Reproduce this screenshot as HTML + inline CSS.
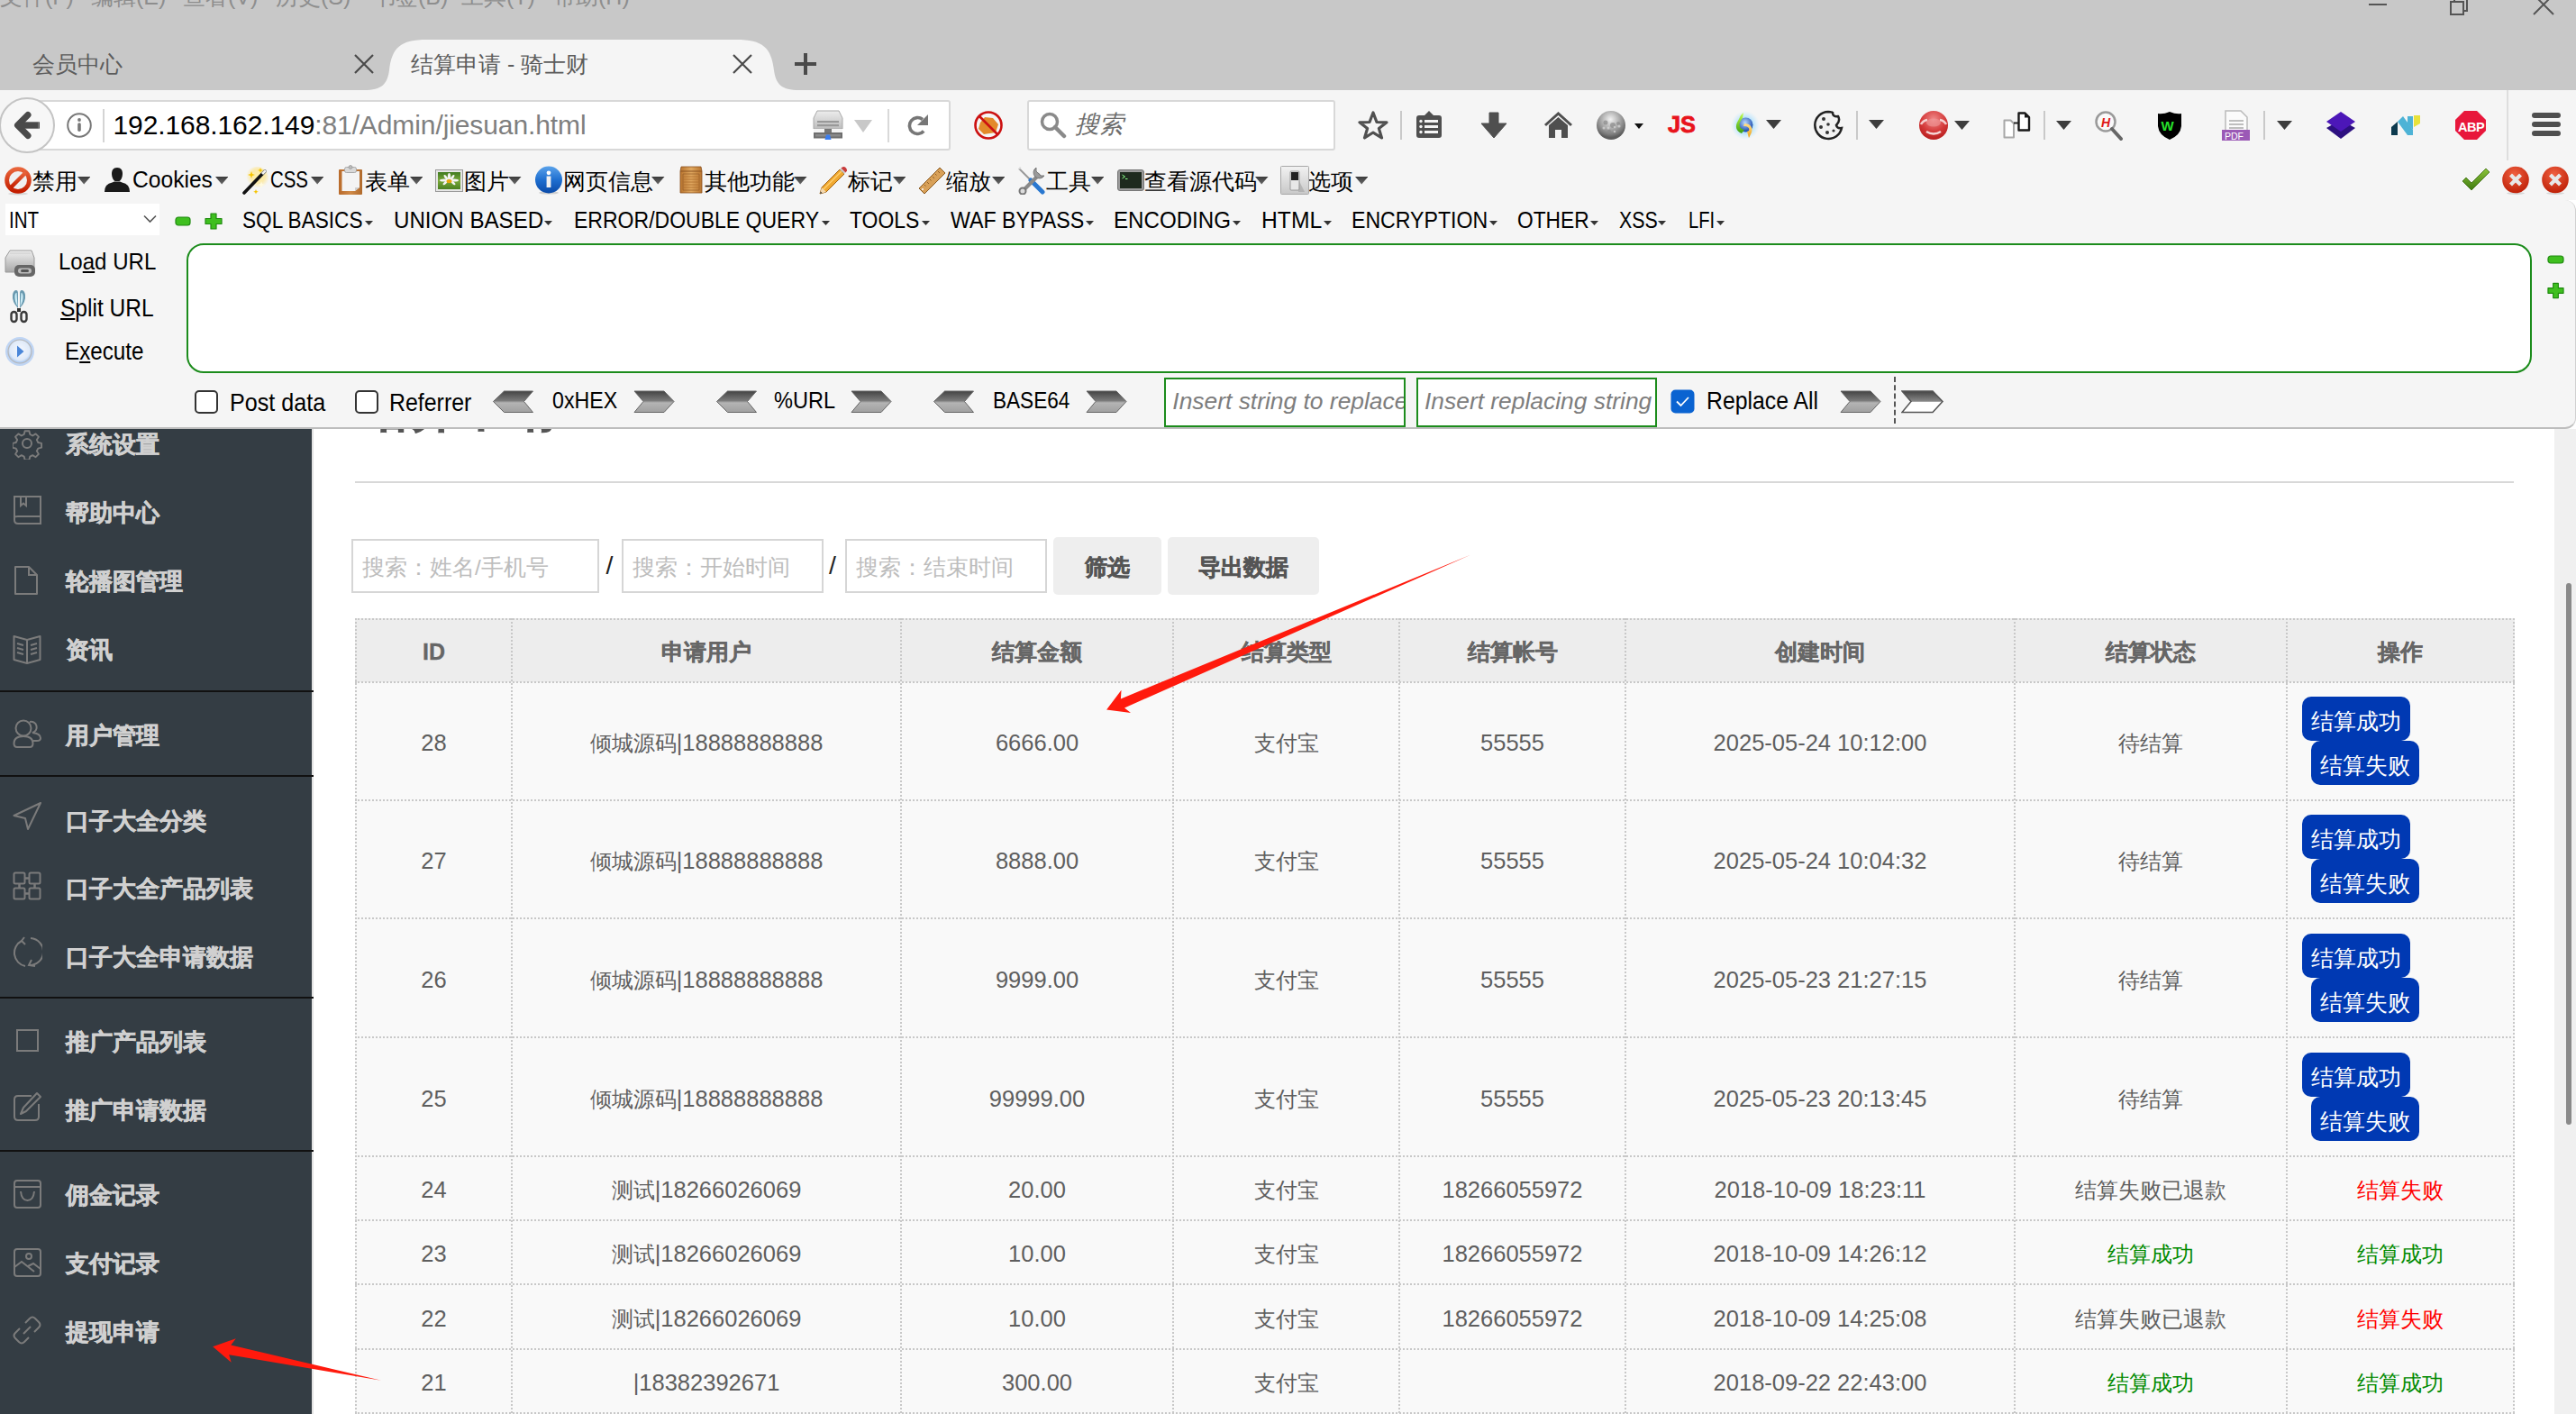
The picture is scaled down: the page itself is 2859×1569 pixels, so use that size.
<!DOCTYPE html>
<html><head><meta charset="utf-8">
<style>
*{box-sizing:border-box}
html,body{margin:0;padding:0}
body{width:2859px;height:1569px;position:relative;overflow:hidden;background:#fff;font-family:"Liberation Sans",sans-serif}
.a{position:absolute}
.t{position:absolute;white-space:nowrap;line-height:1}
/* title bar */
#tbar{left:0;top:0;width:2859px;height:100px;background:#c8c8c8}
.menu{color:#8e8e8e;font-size:25px;top:-16px}
/* nav */
#nav{left:0;top:100px;width:2859px;height:122px;background:#f5f5f5}
/* hackbar */
#hack{left:-2px;top:222px;width:2861px;height:254px;background:#f5f5f5;border-bottom:2px solid #bdbdbd;border-right:1.5px solid #d0d0d0;border-radius:0 12px 12px 0}
/* page */
#side{left:0;top:476px;width:348px;height:1093px;background:#343d44;border-right:2px solid #e3e3e3}
.si{color:#d0d0d0;font-weight:bold;font-size:26px;left:73px;-webkit-text-stroke:0.6px #d0d0d0}
.sdiv{left:0;width:348px;height:2px;background:#111}
.sic{left:14px;width:32px;height:32px}
</style></head><body>

<!-- ===== TITLE BAR / TABS ===== -->
<div id="tbar" class="a">
  <div class="t menu" style="left:0">文件(F)</div>
  <div class="t menu" style="left:101px">编辑(E)</div>
  <div class="t menu" style="left:203px">查看(V)</div>
  <div class="t menu" style="left:306px">历史(S)</div>
  <div class="t menu" style="left:414px">书签(B)</div>
  <div class="t menu" style="left:512px">工具(T)</div>
  <div class="t menu" style="left:614px">帮助(H)</div>
  <!-- window controls -->
  <div class="a" style="left:2629px;top:4px;width:20px;height:2px;background:#555"></div>
  <svg class="a" style="left:2718px;top:-6px" width="24" height="24" viewBox="0 0 24 24"><path d="M2 8h14v14H2z M6 8V4h14v14h-4" fill="none" stroke="#555" stroke-width="2"/></svg>
  <svg class="a" style="left:2810px;top:-6px" width="26" height="24" viewBox="0 0 26 24"><path d="M2 0L24 22M24 0L2 22" fill="none" stroke="#555" stroke-width="2"/></svg>
  <!-- inactive tab -->
  <div class="t" style="left:36px;top:59px;font-size:25px;color:#5c5c5c">会员中心</div>
  <svg class="a" style="left:393px;top:60px" width="22" height="22" viewBox="0 0 22 22"><path d="M1 1L21 21M21 1L1 21" stroke="#4a4a4a" stroke-width="2.2"/></svg>
  <!-- active tab -->
  <svg class="a" style="left:404px;top:43px" width="483" height="57" viewBox="0 0 483 57"><path d="M0 57 C20 57 26 50 28 35 C31 10 40 1 70 1 L413 1 C443 1 452 10 455 35 C457 50 463 57 483 57 Z" fill="#f5f5f5"/></svg>
  <div class="t" style="left:456px;top:59px;font-size:25px;color:#5c5c5c">结算申请 - 骑士财</div>
  <svg class="a" style="left:813px;top:60px" width="22" height="22" viewBox="0 0 22 22"><path d="M1 1L21 21M21 1L1 21" stroke="#4a4a4a" stroke-width="2.2"/></svg>
  <svg class="a" style="left:882px;top:59px" width="24" height="24" viewBox="0 0 24 24"><path d="M12 0V24M0 12H24" stroke="#4a4a4a" stroke-width="4"/></svg>
</div>

<!-- ===== NAV BAR ===== -->
<div id="nav" class="a"></div>
<div class="a" style="left:20px;top:111px;width:1035px;height:56px;background:#fff;border:2px solid #d8d8d8;border-radius:3px"></div>
<div class="a" style="left:-1px;top:108px;width:62px;height:62px;border-radius:50%;background:#f7f7f7;border:2px solid #c4c4c4"></div>
<svg class="a" style="left:10px;top:119px" width="40" height="40" viewBox="0 0 40 40"><path d="M9.5 20L21 8.5M9.5 20L21 31.5" fill="none" stroke="#4a4a4a" stroke-width="7" stroke-linecap="round" stroke-linejoin="round"/><path d="M9 20H32.5" stroke="#4a4a4a" stroke-width="7.4"/><path d="M32.5 16.3H33.5Q34 16.3 34 17V23Q34 23.7 33.5 23.7H32.5Z" fill="#4a4a4a"/></svg>
<svg class="a" style="left:74px;top:125px" width="28" height="28" viewBox="0 0 28 28"><circle cx="14" cy="14" r="12.8" fill="none" stroke="#777" stroke-width="2"/><circle cx="14" cy="8" r="1.9" fill="#777"/><rect x="12.2" y="11.2" width="3.6" height="9.8" rx="1.8" fill="#777"/></svg>
<div class="a" style="left:114px;top:121px;width:2px;height:37px;background:#d4d4d4"></div>
<div class="t" style="left:125.5px;top:124px;font-size:30px;color:#000;letter-spacing:-0.1px">192.168.162.149<span style="color:#7f7f7f">:81/Admin/jiesuan.html</span></div>
<!-- network icon -->
<svg class="a" style="left:902px;top:122px" width="34" height="34" viewBox="0 0 34 34"><defs><linearGradient id="nd" x1="0" y1="0" x2="0" y2="1"><stop offset="0" stop-color="#ededed"/><stop offset="0.45" stop-color="#d8d8d8"/><stop offset="1" stop-color="#bdbdbd"/></linearGradient></defs><path d="M5 1H29L33 9V21H1V9Z" fill="url(#nd)" stroke="#a8a8a8" stroke-width="1"/><rect x="5" y="12" width="24" height="2.2" fill="#999"/><rect x="5" y="16" width="24" height="2.2" fill="#999"/><rect x="1" y="21" width="32" height="4" fill="#f4f4f4"/><rect x="13" y="21" width="8" height="5" fill="#777"/><rect x="1" y="25" width="32" height="6.5" fill="#6e6e6e"/><rect x="3" y="27" width="28" height="2.5" fill="#8a8a8a"/><path d="M13.5 33L15 27.5H19L20.5 33Z" fill="#3b7ef0"/></svg>
<svg class="a" style="left:948px;top:133px" width="20" height="14" viewBox="0 0 20 14"><path d="M0 0H20L10 14Z" fill="#c8c8c8"/></svg>
<div class="a" style="left:985px;top:121px;width:2px;height:37px;background:#d9d9d9"></div>
<svg class="a" style="left:1005px;top:126px" width="27" height="27" viewBox="0 0 27 27"><path d="M20.2 19.5A9 9 0 1 1 19 6.5" fill="none" stroke="#777" stroke-width="3.6"/><path d="M25 1V13H13Z" fill="#777"/></svg>
<!-- no-fox -->
<svg class="a" style="left:1080px;top:122px" width="34" height="34" viewBox="0 0 34 34"><path d="M8 14L13 8L22 9L28 16L25 25L12 27L6 21Z" fill="#e38a2a"/><circle cx="17" cy="17" r="14.5" fill="none" stroke="#cc1111" stroke-width="2.6"/><path d="M7 7L27 27" stroke="#cc1111" stroke-width="2.6"/></svg>
<!-- search -->
<div class="a" style="left:1140px;top:111px;width:342px;height:56px;background:#fff;border:2px solid #d8d8d8;border-radius:3px"></div>
<svg class="a" style="left:1154px;top:124px" width="30" height="30" viewBox="0 0 30 30"><circle cx="11" cy="11" r="8.5" fill="none" stroke="#8a8a8a" stroke-width="3.5"/><path d="M17 17L27 27" stroke="#8a8a8a" stroke-width="4.5" stroke-linecap="round"/></svg>
<div class="t" style="left:1193px;top:125px;font-size:27px;color:#6d6d6d;font-style:italic">搜索</div>

<!-- right nav icons -->
<svg class="a" style="left:1506px;top:122px" width="36" height="34" viewBox="0 0 36 34"><path d="M18 3L22 13.5L33 13.8L24.4 20.6L27.5 31L18 25L8.5 31L11.6 20.6L3 13.8L14 13.5Z" fill="none" stroke="#4f4f4f" stroke-width="3.2" stroke-linejoin="round"/></svg>
<div class="a" style="left:1554px;top:123px;width:2px;height:32px;background:#c9c9c9"></div>
<svg class="a" style="left:1571px;top:122px" width="30" height="32" viewBox="0 0 30 32"><path d="M15 1L20 6H26Q29 6 29 9V28Q29 31 26 31H4Q1 31 1 28V9Q1 6 4 6H10Z" fill="#4f4f4f"/><rect x="10" y="11" width="15" height="3" fill="#f5f5f5"/><rect x="10" y="17" width="15" height="3" fill="#f5f5f5"/><rect x="10" y="23" width="15" height="3" fill="#f5f5f5"/><circle cx="6" cy="12.5" r="1.7" fill="#f5f5f5"/><circle cx="6" cy="18.5" r="1.7" fill="#f5f5f5"/><circle cx="6" cy="24.5" r="1.7" fill="#f5f5f5"/></svg>
<svg class="a" style="left:1643px;top:124px" width="30" height="30" viewBox="0 0 30 30"><path d="M10 1H20V13H29L15 29L1 13H10Z" fill="#4f4f4f" stroke="#4f4f4f" stroke-width="1" stroke-linejoin="round"/></svg>
<svg class="a" style="left:1713px;top:124px" width="33" height="30" viewBox="0 0 33 30"><path d="M2 15L16.5 2L31 15" fill="none" stroke="#4f4f4f" stroke-width="3"/><path d="M6 15L16.5 6L27 15V29H20V20H13V29H6Z" fill="#4f4f4f"/></svg>
<svg class="a" style="left:1771px;top:122px" width="34" height="34" viewBox="0 0 34 34"><defs><radialGradient id="gg" cx="0.48" cy="0.3" r="0.62"><stop offset="0" stop-color="#f2f2f2"/><stop offset="0.45" stop-color="#b4b4b4"/><stop offset="0.85" stop-color="#7a7a7a"/><stop offset="1" stop-color="#5e5e5e"/></radialGradient></defs><circle cx="17" cy="17" r="16" fill="url(#gg)"/><g fill="#8a8a8a" opacity="0.7"><circle cx="11" cy="14" r="2.5"/><circle cx="19" cy="17" r="3"/><circle cx="15" cy="24" r="2.2"/><circle cx="25" cy="15" r="2"/></g><g fill="#d8d8d8" opacity="0.7"><circle cx="9" cy="20" r="1.5"/><circle cx="14" cy="20" r="1.5"/><circle cx="21" cy="19" r="1.3"/><circle cx="21" cy="24" r="1.3"/><circle cx="26" cy="18" r="1.6"/></g></svg>
<svg class="a" style="left:1814px;top:137px" width="10" height="6" viewBox="0 0 10 6"><path d="M0 0H10L5 6Z" fill="#111"/></svg>
<div class="t" style="left:1850.5px;top:126.2px;font-size:25.73px;color:#e8141c;transform:scaleX(0.985);transform-origin:0 0;font-weight:bold;-webkit-text-stroke:0.8px #e8141c;">JS</div>
<svg class="a" style="left:1920px;top:122px" width="34" height="34" viewBox="0 0 34 34"><defs><radialGradient id="sglow" cx="0.5" cy="0.5" r="0.5"><stop offset="0.5" stop-color="#9fdcff" stop-opacity="0.8"/><stop offset="1" stop-color="#bfe8ff" stop-opacity="0"/></radialGradient><radialGradient id="sglb" cx="0.45" cy="0.35" r="0.6"><stop offset="0" stop-color="#b8d8ff"/><stop offset="1" stop-color="#1f4fb0"/></radialGradient><linearGradient id="sgr" x1="0" y1="0" x2="0" y2="1"><stop offset="0" stop-color="#c8ff50"/><stop offset="1" stop-color="#3aa010"/></linearGradient><linearGradient id="syl" x1="0" y1="0" x2="0" y2="1"><stop offset="0" stop-color="#ffe090"/><stop offset="1" stop-color="#f0a010"/></linearGradient></defs><circle cx="17" cy="17" r="16" fill="url(#sglow)"/><circle cx="17.5" cy="16.5" r="8" fill="url(#sglb)"/><path d="M13 26C7 24 5 18 9 12L12 6L15 3L14 9L12 12C9 17 11 21 16 22Z" fill="url(#sgr)"/><path d="M16 15C22 15 26 19 24 25L21 31L19 24L21 23C22 20 20 18 15 18Z" fill="url(#syl)"/></svg>
<svg class="a" style="left:1960px;top:133px" width="17" height="10" viewBox="0 0 17 10"><path d="M0 0H17L8.5 10Z" fill="#3d3d3d"/></svg>
<svg class="a" style="left:2012px;top:122px" width="35" height="34" viewBox="0 0 35 34"><path d="M17 2A15 15 0 1 0 32 20Q27 21 26 17Q31 12 28 7Q22 8 22 3Q20 2 17 2Z" fill="#f2f2f2" stroke="#222" stroke-width="2.5"/><circle cx="12" cy="10" r="2" fill="#333"/><circle cx="9" cy="19" r="2" fill="#333"/><circle cx="17" cy="16" r="1.8" fill="#333"/><circle cx="16" cy="25" r="2" fill="#333"/><circle cx="23" cy="23" r="1.6" fill="#333"/></svg>
<div class="a" style="left:2060px;top:123px;width:2px;height:32px;background:#c9c9c9"></div>
<svg class="a" style="left:2074px;top:133px" width="17" height="10" viewBox="0 0 17 10"><path d="M0 0H17L8.5 10Z" fill="#3d3d3d"/></svg>
<svg class="a" style="left:2129px;top:122px" width="34" height="34" viewBox="0 0 34 34"><defs><radialGradient id="rg" cx="0.5" cy="0.3" r="0.7"><stop offset="0" stop-color="#f08a8a"/><stop offset="0.6" stop-color="#d43a3a"/><stop offset="1" stop-color="#b81e1e"/></radialGradient></defs><circle cx="17" cy="17" r="16" fill="url(#rg)"/><path d="M3 16Q5 12 10 11M31 16Q29 12 24 11" fill="none" stroke="#fff" stroke-width="2.6" opacity="0.75"/><path d="M9 24Q17 29 25 24" fill="none" stroke="#fff" stroke-width="2.6" opacity="0.8"/><ellipse cx="17" cy="14" rx="8" ry="4.5" fill="#f09a9a" opacity="0.6"/></svg>
<svg class="a" style="left:2169px;top:134px" width="17" height="10" viewBox="0 0 17 10"><path d="M0 0H17L8.5 10Z" fill="#3d3d3d"/></svg>
<svg class="a" style="left:2222px;top:123px" width="32" height="32" viewBox="0 0 32 32"><path d="M2.5 10.5H9.5L13 14V29.5H2.5Z" fill="#fff" stroke="#a8a8a8" stroke-width="2" stroke-linejoin="round"/><path d="M18.5 2.5H25.5L30 7V21.5H18.5Z" fill="#fff" stroke="#1a1a1a" stroke-width="2.4" stroke-linejoin="round"/><path d="M25 2.5V7.5H30Z" fill="#1a1a1a"/><path d="M13 13.5H18.5" stroke="#222" stroke-width="2"/></svg>
<div class="a" style="left:2268px;top:123px;width:2px;height:32px;background:#c9c9c9"></div>
<svg class="a" style="left:2282px;top:134px" width="17" height="10" viewBox="0 0 17 10"><path d="M0 0H17L8.5 10Z" fill="#3d3d3d"/></svg>
<svg class="a" style="left:2324px;top:122px" width="32" height="34" viewBox="0 0 32 34"><circle cx="13" cy="13" r="10.5" fill="#fafafa" stroke="#9a9a9a" stroke-width="2.5"/><path d="M20 21L30 32" stroke="#666" stroke-width="4" stroke-linecap="round"/><text x="8" y="19" font-size="14" font-weight="bold" font-style="italic" fill="#e01818" font-family="Liberation Sans">H</text></svg>
<svg class="a" style="left:2394px;top:123px" width="28" height="33" viewBox="0 0 28 33"><path d="M14 1Q21 4 27 3V17Q26 27 14 32Q2 27 1 17V3Q7 4 14 1Z" fill="#000"/><text x="4.5" y="22" font-size="15" font-weight="bold" fill="#27e02c" font-family="Liberation Sans">W</text></svg>
<svg class="a" style="left:2466px;top:122px" width="31" height="34" viewBox="0 0 31 34"><path d="M4 1H21L28 8V24H4Z" fill="#fbfbfb" stroke="#bbb" stroke-width="1.5"/><path d="M8 12H24M8 16H24M8 20H24" stroke="#aaa" stroke-width="1.3"/><rect x="0" y="22" width="31" height="12" fill="#9b59b6"/><text x="3" y="32.5" font-size="10.5" fill="#fff" font-family="Liberation Sans">PDF</text></svg>
<div class="a" style="left:2512px;top:123px;width:2px;height:32px;background:#c9c9c9"></div>
<svg class="a" style="left:2527px;top:134px" width="17" height="10" viewBox="0 0 17 10"><path d="M0 0H17L8.5 10Z" fill="#3d3d3d"/></svg>
<svg class="a" style="left:2581px;top:123px" width="34" height="32" viewBox="0 0 34 32"><path d="M17 10L33 19L17 31L1 19Z" fill="#2d1080"/><path d="M17 1L33 12L17 23L1 12Z" fill="#4c17b8"/></svg>
<svg class="a" style="left:2653px;top:127px" width="34" height="24" viewBox="0 0 34 24"><path d="M1 14L8 8V23H1Z" fill="#0c3a4e"/><path d="M8 8L14 2L25 17V23H19L8 8Z" fill="#4db3d6"/><path d="M19 2H25V17L19 10Z" fill="#4db3d6"/><path d="M26 1L33 1V10L26 14Z" fill="#e8e23a"/></svg>
<svg class="a" style="left:2724px;top:122px" width="36" height="34" viewBox="0 0 36 34"><path d="M11 1H25L35 11V23L25 33H11L1 23V11Z" fill="#e8173b"/><text x="4" y="24" font-size="14.5" font-weight="bold" fill="#fff" font-family="Liberation Sans" letter-spacing="-0.5">ABP</text></svg>
<div class="a" style="left:2782px;top:100px;width:2px;height:78px;background:#dedede"></div>
<svg class="a" style="left:2809px;top:124px" width="34" height="28" viewBox="0 0 34 28"><path d="M4 4H30M4 14H30M4 24H30" stroke="#4f4f4f" stroke-width="6" stroke-linecap="round"/></svg>
<!-- ===== PAGE ===== -->
<div class="a" style="left:0;top:476px;width:2859px;height:1093px;background:#fff"></div>
<div class="t" style="left:397px;top:425px;font-size:56px;font-weight:bold;color:#555;-webkit-text-stroke:0.8px #555">结算申请</div>
<div class="a" style="left:394px;top:534px;width:2396px;height:2px;background:#d8d8d8"></div>
<div class="a" style="left:390px;top:598px;width:275px;height:60px;border:2px solid #d6d6d6;background:#fff"></div><div class="t" style="left:402px;top:618px;font-size:24.5px;color:#bdbdbd">搜索：姓名/手机号</div>
<div class="t" style="left:672.4px;top:613.3px;font-size:28.49px;color:#222;">/</div>
<div class="a" style="left:690px;top:598px;width:224px;height:60px;border:2px solid #d6d6d6;background:#fff"></div><div class="t" style="left:702px;top:618px;font-size:24.5px;color:#bdbdbd">搜索：开始时间</div>
<div class="t" style="left:920.0px;top:613.3px;font-size:28.49px;color:#222;">/</div>
<div class="a" style="left:938px;top:598px;width:224px;height:60px;border:2px solid #d6d6d6;background:#fff"></div><div class="t" style="left:950px;top:618px;font-size:24.5px;color:#bdbdbd">搜索：结束时间</div>
<div class="a" style="left:1169px;top:596px;width:120px;height:64px;background:#eeeeee;border-radius:5px"></div><div class="t" style="left:1169px;width:120px;text-align:center;top:617px;font-size:25px;font-weight:bold;color:#555;-webkit-text-stroke:0.6px #555">筛选</div>
<div class="a" style="left:1296px;top:596px;width:168px;height:64px;background:#eeeeee;border-radius:5px"></div><div class="t" style="left:1296px;width:168px;text-align:center;top:617px;font-size:25px;font-weight:bold;color:#555;-webkit-text-stroke:0.6px #555">导出数据</div>
<div class="a" style="left:394px;top:686px;width:2397px;height:71px;background:#ededed"></div>
<div class="a" style="left:394px;top:757px;width:2397px;height:812px;background:#f9f9f9"></div>
<div class="a" style="left:394px;top:686px;width:2397px;height:0;border-top:2px dotted #c8c8c8"></div>
<div class="a" style="left:394px;top:756px;width:2397px;height:0;border-top:2px dotted #c8c8c8"></div>
<div class="a" style="left:394px;top:887px;width:2397px;height:0;border-top:2px dotted #c8c8c8"></div>
<div class="a" style="left:394px;top:1018px;width:2397px;height:0;border-top:2px dotted #c8c8c8"></div>
<div class="a" style="left:394px;top:1150px;width:2397px;height:0;border-top:2px dotted #c8c8c8"></div>
<div class="a" style="left:394px;top:1282px;width:2397px;height:0;border-top:2px dotted #c8c8c8"></div>
<div class="a" style="left:394px;top:1353px;width:2397px;height:0;border-top:2px dotted #c8c8c8"></div>
<div class="a" style="left:394px;top:1424px;width:2397px;height:0;border-top:2px dotted #c8c8c8"></div>
<div class="a" style="left:394px;top:1496px;width:2397px;height:0;border-top:2px dotted #c8c8c8"></div>
<div class="a" style="left:394px;top:1567px;width:2397px;height:0;border-top:2px dotted #c8c8c8"></div>
<div class="a" style="left:394px;top:686px;width:0;height:890px;border-left:2px dotted #c8c8c8"></div>
<div class="a" style="left:567px;top:686px;width:0;height:890px;border-left:2px dotted #c8c8c8"></div>
<div class="a" style="left:999px;top:686px;width:0;height:890px;border-left:2px dotted #c8c8c8"></div>
<div class="a" style="left:1301px;top:686px;width:0;height:890px;border-left:2px dotted #c8c8c8"></div>
<div class="a" style="left:1552px;top:686px;width:0;height:890px;border-left:2px dotted #c8c8c8"></div>
<div class="a" style="left:1803px;top:686px;width:0;height:890px;border-left:2px dotted #c8c8c8"></div>
<div class="a" style="left:2235px;top:686px;width:0;height:890px;border-left:2px dotted #c8c8c8"></div>
<div class="a" style="left:2537px;top:686px;width:0;height:890px;border-left:2px dotted #c8c8c8"></div>
<div class="a" style="left:2789px;top:686px;width:0;height:890px;border-left:2px dotted #c8c8c8"></div>
<div class="t" style="left:396px;width:171px;text-align:center;top:703.0px;line-height:40px;font-size:25px;font-weight:bold;color:#666;-webkit-text-stroke:0.35px #666">ID</div>
<div class="t" style="left:569px;width:430px;text-align:center;top:703.0px;line-height:40px;font-size:25px;font-weight:bold;color:#666;-webkit-text-stroke:0.35px #666">申请用户</div>
<div class="t" style="left:1001px;width:300px;text-align:center;top:703.0px;line-height:40px;font-size:25px;font-weight:bold;color:#666;-webkit-text-stroke:0.35px #666">结算金额</div>
<div class="t" style="left:1303px;width:249px;text-align:center;top:703.0px;line-height:40px;font-size:25px;font-weight:bold;color:#666;-webkit-text-stroke:0.35px #666">结算类型</div>
<div class="t" style="left:1554px;width:249px;text-align:center;top:703.0px;line-height:40px;font-size:25px;font-weight:bold;color:#666;-webkit-text-stroke:0.35px #666">结算帐号</div>
<div class="t" style="left:1805px;width:430px;text-align:center;top:703.0px;line-height:40px;font-size:25px;font-weight:bold;color:#666;-webkit-text-stroke:0.35px #666">创建时间</div>
<div class="t" style="left:2237px;width:300px;text-align:center;top:703.0px;line-height:40px;font-size:25px;font-weight:bold;color:#666;-webkit-text-stroke:0.35px #666">结算状态</div>
<div class="t" style="left:2539px;width:250px;text-align:center;top:703.0px;line-height:40px;font-size:25px;font-weight:bold;color:#666;-webkit-text-stroke:0.35px #666">操作</div>
<div class="t" style="left:396px;width:171px;text-align:center;top:804.0px;line-height:40px;font-size:25.5px;color:#5e5e5e">28</div>
<div class="t" style="left:569px;width:430px;text-align:center;top:804.0px;line-height:40px;font-size:25.5px;color:#5e5e5e"><span style="font-size:24px">倾城源码</span>|18888888888</div>
<div class="t" style="left:1001px;width:300px;text-align:center;top:804.0px;line-height:40px;font-size:25.5px;color:#5e5e5e">6666.00</div>
<div class="t" style="left:1303px;width:249px;text-align:center;top:804.0px;line-height:40px;font-size:25.5px;color:#5e5e5e"><span style="font-size:24px">支付宝</span></div>
<div class="t" style="left:1554px;width:249px;text-align:center;top:804.0px;line-height:40px;font-size:25.5px;color:#5e5e5e">55555</div>
<div class="t" style="left:1805px;width:430px;text-align:center;top:804.0px;line-height:40px;font-size:25.5px;color:#5e5e5e">2025-05-24 10:12:00</div>
<div class="t" style="left:2237px;width:300px;text-align:center;top:804.0px;line-height:40px;font-size:25.5px;color:#5e5e5e"><span style="font-size:24px">待结算</span></div>
<div class="a" style="left:2555px;top:773.0px;width:120px;height:49px;background:#0039b3;border-radius:10px"></div><div class="t" style="left:2555px;width:120px;text-align:center;top:781.0px;line-height:40px;font-size:24.5px;color:#fff">结算成功</div>
<div class="a" style="left:2565px;top:822.0px;width:120px;height:49px;background:#0039b3;border-radius:10px"></div><div class="t" style="left:2565px;width:120px;text-align:center;top:830.0px;line-height:40px;font-size:24.5px;color:#fff">结算失败</div>
<div class="t" style="left:396px;width:171px;text-align:center;top:935.2px;line-height:40px;font-size:25.5px;color:#5e5e5e">27</div>
<div class="t" style="left:569px;width:430px;text-align:center;top:935.2px;line-height:40px;font-size:25.5px;color:#5e5e5e"><span style="font-size:24px">倾城源码</span>|18888888888</div>
<div class="t" style="left:1001px;width:300px;text-align:center;top:935.2px;line-height:40px;font-size:25.5px;color:#5e5e5e">8888.00</div>
<div class="t" style="left:1303px;width:249px;text-align:center;top:935.2px;line-height:40px;font-size:25.5px;color:#5e5e5e"><span style="font-size:24px">支付宝</span></div>
<div class="t" style="left:1554px;width:249px;text-align:center;top:935.2px;line-height:40px;font-size:25.5px;color:#5e5e5e">55555</div>
<div class="t" style="left:1805px;width:430px;text-align:center;top:935.2px;line-height:40px;font-size:25.5px;color:#5e5e5e">2025-05-24 10:04:32</div>
<div class="t" style="left:2237px;width:300px;text-align:center;top:935.2px;line-height:40px;font-size:25.5px;color:#5e5e5e"><span style="font-size:24px">待结算</span></div>
<div class="a" style="left:2555px;top:904.2px;width:120px;height:49px;background:#0039b3;border-radius:10px"></div><div class="t" style="left:2555px;width:120px;text-align:center;top:912.2px;line-height:40px;font-size:24.5px;color:#fff">结算成功</div>
<div class="a" style="left:2565px;top:953.2px;width:120px;height:49px;background:#0039b3;border-radius:10px"></div><div class="t" style="left:2565px;width:120px;text-align:center;top:961.2px;line-height:40px;font-size:24.5px;color:#fff">结算失败</div>
<div class="t" style="left:396px;width:171px;text-align:center;top:1066.8px;line-height:40px;font-size:25.5px;color:#5e5e5e">26</div>
<div class="t" style="left:569px;width:430px;text-align:center;top:1066.8px;line-height:40px;font-size:25.5px;color:#5e5e5e"><span style="font-size:24px">倾城源码</span>|18888888888</div>
<div class="t" style="left:1001px;width:300px;text-align:center;top:1066.8px;line-height:40px;font-size:25.5px;color:#5e5e5e">9999.00</div>
<div class="t" style="left:1303px;width:249px;text-align:center;top:1066.8px;line-height:40px;font-size:25.5px;color:#5e5e5e"><span style="font-size:24px">支付宝</span></div>
<div class="t" style="left:1554px;width:249px;text-align:center;top:1066.8px;line-height:40px;font-size:25.5px;color:#5e5e5e">55555</div>
<div class="t" style="left:1805px;width:430px;text-align:center;top:1066.8px;line-height:40px;font-size:25.5px;color:#5e5e5e">2025-05-23 21:27:15</div>
<div class="t" style="left:2237px;width:300px;text-align:center;top:1066.8px;line-height:40px;font-size:25.5px;color:#5e5e5e"><span style="font-size:24px">待结算</span></div>
<div class="a" style="left:2555px;top:1035.8px;width:120px;height:49px;background:#0039b3;border-radius:10px"></div><div class="t" style="left:2555px;width:120px;text-align:center;top:1043.8px;line-height:40px;font-size:24.5px;color:#fff">结算成功</div>
<div class="a" style="left:2565px;top:1084.8px;width:120px;height:49px;background:#0039b3;border-radius:10px"></div><div class="t" style="left:2565px;width:120px;text-align:center;top:1092.8px;line-height:40px;font-size:24.5px;color:#fff">结算失败</div>
<div class="t" style="left:396px;width:171px;text-align:center;top:1198.5px;line-height:40px;font-size:25.5px;color:#5e5e5e">25</div>
<div class="t" style="left:569px;width:430px;text-align:center;top:1198.5px;line-height:40px;font-size:25.5px;color:#5e5e5e"><span style="font-size:24px">倾城源码</span>|18888888888</div>
<div class="t" style="left:1001px;width:300px;text-align:center;top:1198.5px;line-height:40px;font-size:25.5px;color:#5e5e5e">99999.00</div>
<div class="t" style="left:1303px;width:249px;text-align:center;top:1198.5px;line-height:40px;font-size:25.5px;color:#5e5e5e"><span style="font-size:24px">支付宝</span></div>
<div class="t" style="left:1554px;width:249px;text-align:center;top:1198.5px;line-height:40px;font-size:25.5px;color:#5e5e5e">55555</div>
<div class="t" style="left:1805px;width:430px;text-align:center;top:1198.5px;line-height:40px;font-size:25.5px;color:#5e5e5e">2025-05-23 20:13:45</div>
<div class="t" style="left:2237px;width:300px;text-align:center;top:1198.5px;line-height:40px;font-size:25.5px;color:#5e5e5e"><span style="font-size:24px">待结算</span></div>
<div class="a" style="left:2555px;top:1167.5px;width:120px;height:49px;background:#0039b3;border-radius:10px"></div><div class="t" style="left:2555px;width:120px;text-align:center;top:1175.5px;line-height:40px;font-size:24.5px;color:#fff">结算成功</div>
<div class="a" style="left:2565px;top:1216.5px;width:120px;height:49px;background:#0039b3;border-radius:10px"></div><div class="t" style="left:2565px;width:120px;text-align:center;top:1224.5px;line-height:40px;font-size:24.5px;color:#fff">结算失败</div>
<div class="t" style="left:396px;width:171px;text-align:center;top:1300.0px;line-height:40px;font-size:25.5px;color:#5e5e5e">24</div>
<div class="t" style="left:569px;width:430px;text-align:center;top:1300.0px;line-height:40px;font-size:25.5px;color:#5e5e5e"><span style="font-size:24px">测试</span>|18266026069</div>
<div class="t" style="left:1001px;width:300px;text-align:center;top:1300.0px;line-height:40px;font-size:25.5px;color:#5e5e5e">20.00</div>
<div class="t" style="left:1303px;width:249px;text-align:center;top:1300.0px;line-height:40px;font-size:25.5px;color:#5e5e5e"><span style="font-size:24px">支付宝</span></div>
<div class="t" style="left:1554px;width:249px;text-align:center;top:1300.0px;line-height:40px;font-size:25.5px;color:#5e5e5e">18266055972</div>
<div class="t" style="left:1805px;width:430px;text-align:center;top:1300.0px;line-height:40px;font-size:25.5px;color:#5e5e5e">2018-10-09 18:23:11</div>
<div class="t" style="left:2237px;width:300px;text-align:center;top:1300.0px;line-height:40px;font-size:25.5px;color:#5e5e5e"><span style="font-size:24px">结算失败已退款</span></div>
<div class="t" style="left:2539px;width:250px;text-align:center;top:1300.0px;line-height:40px;font-size:25.5px;color:#ff0000"><span style="font-size:24px">结算失败</span></div>
<div class="t" style="left:396px;width:171px;text-align:center;top:1371.2px;line-height:40px;font-size:25.5px;color:#5e5e5e">23</div>
<div class="t" style="left:569px;width:430px;text-align:center;top:1371.2px;line-height:40px;font-size:25.5px;color:#5e5e5e"><span style="font-size:24px">测试</span>|18266026069</div>
<div class="t" style="left:1001px;width:300px;text-align:center;top:1371.2px;line-height:40px;font-size:25.5px;color:#5e5e5e">10.00</div>
<div class="t" style="left:1303px;width:249px;text-align:center;top:1371.2px;line-height:40px;font-size:25.5px;color:#5e5e5e"><span style="font-size:24px">支付宝</span></div>
<div class="t" style="left:1554px;width:249px;text-align:center;top:1371.2px;line-height:40px;font-size:25.5px;color:#5e5e5e">18266055972</div>
<div class="t" style="left:1805px;width:430px;text-align:center;top:1371.2px;line-height:40px;font-size:25.5px;color:#5e5e5e">2018-10-09 14:26:12</div>
<div class="t" style="left:2237px;width:300px;text-align:center;top:1371.2px;line-height:40px;font-size:25.5px;color:#008a00"><span style="font-size:24px">结算成功</span></div>
<div class="t" style="left:2539px;width:250px;text-align:center;top:1371.2px;line-height:40px;font-size:25.5px;color:#008a00"><span style="font-size:24px">结算成功</span></div>
<div class="t" style="left:396px;width:171px;text-align:center;top:1442.8px;line-height:40px;font-size:25.5px;color:#5e5e5e">22</div>
<div class="t" style="left:569px;width:430px;text-align:center;top:1442.8px;line-height:40px;font-size:25.5px;color:#5e5e5e"><span style="font-size:24px">测试</span>|18266026069</div>
<div class="t" style="left:1001px;width:300px;text-align:center;top:1442.8px;line-height:40px;font-size:25.5px;color:#5e5e5e">10.00</div>
<div class="t" style="left:1303px;width:249px;text-align:center;top:1442.8px;line-height:40px;font-size:25.5px;color:#5e5e5e"><span style="font-size:24px">支付宝</span></div>
<div class="t" style="left:1554px;width:249px;text-align:center;top:1442.8px;line-height:40px;font-size:25.5px;color:#5e5e5e">18266055972</div>
<div class="t" style="left:1805px;width:430px;text-align:center;top:1442.8px;line-height:40px;font-size:25.5px;color:#5e5e5e">2018-10-09 14:25:08</div>
<div class="t" style="left:2237px;width:300px;text-align:center;top:1442.8px;line-height:40px;font-size:25.5px;color:#5e5e5e"><span style="font-size:24px">结算失败已退款</span></div>
<div class="t" style="left:2539px;width:250px;text-align:center;top:1442.8px;line-height:40px;font-size:25.5px;color:#ff0000"><span style="font-size:24px">结算失败</span></div>
<div class="t" style="left:396px;width:171px;text-align:center;top:1514.0px;line-height:40px;font-size:25.5px;color:#5e5e5e">21</div>
<div class="t" style="left:569px;width:430px;text-align:center;top:1514.0px;line-height:40px;font-size:25.5px;color:#5e5e5e">|18382392671</div>
<div class="t" style="left:1001px;width:300px;text-align:center;top:1514.0px;line-height:40px;font-size:25.5px;color:#5e5e5e">300.00</div>
<div class="t" style="left:1303px;width:249px;text-align:center;top:1514.0px;line-height:40px;font-size:25.5px;color:#5e5e5e"><span style="font-size:24px">支付宝</span></div>
<div class="t" style="left:1554px;width:249px;text-align:center;top:1514.0px;line-height:40px;font-size:25.5px;color:#5e5e5e"></div>
<div class="t" style="left:1805px;width:430px;text-align:center;top:1514.0px;line-height:40px;font-size:25.5px;color:#5e5e5e">2018-09-22 22:43:00</div>
<div class="t" style="left:2237px;width:300px;text-align:center;top:1514.0px;line-height:40px;font-size:25.5px;color:#008a00"><span style="font-size:24px">结算成功</span></div>
<div class="t" style="left:2539px;width:250px;text-align:center;top:1514.0px;line-height:40px;font-size:25.5px;color:#008a00"><span style="font-size:24px">结算成功</span></div>
<div class="a" style="left:2835px;top:476px;width:24px;height:1093px;background:#f0f0f0"></div>
<div class="a" style="left:2848px;top:647px;width:6px;height:601px;background:#8a8a8a;border-radius:3px"></div>
<div id="side" class="a"></div>
<div class="t si" style="top:480.0px">系统设置</div>
<div class="t si" style="top:556.0px">帮助中心</div>
<div class="t si" style="top:632.0px">轮播图管理</div>
<div class="t si" style="top:708.0px">资讯</div>
<div class="t si" style="top:803.0px">用户管理</div>
<div class="t si" style="top:897.5px">口子大全分类</div>
<div class="t si" style="top:973.0px">口子大全产品列表</div>
<div class="t si" style="top:1049.0px">口子大全申请数据</div>
<div class="t si" style="top:1143.0px">推广产品列表</div>
<div class="t si" style="top:1218.5px">推广申请数据</div>
<div class="t si" style="top:1313.0px">佣金记录</div>
<div class="t si" style="top:1388.5px">支付记录</div>
<div class="t si" style="top:1465.0px">提现申请</div>
<svg class="a" style="left:14px;top:476px" width="33" height="34" viewBox="0 0 33 34"><path d="M13.5 1.5h5l1 4 3 1.5 3.6-2.2 3.5 3.5-2.2 3.6 1.5 3 4 1v5l-4 1-1.5 3 2.2 3.6-3.5 3.5-3.6-2.2-3 1.5-1 4h-5l-1-4-3-1.5-3.6 2.2-3.5-3.5 2.2-3.6-1.5-3-4-1v-5l4-1 1.5-3-2.2-3.6 3.5-3.5 3.6 2.2 3-1.5z" fill="none" stroke="#7b7b7b" stroke-width="2" stroke-linejoin="round" transform="translate(16 16) scale(0.95) translate(-16 -16)"/><circle cx="16" cy="16" r="5" fill="none" stroke="#7b7b7b" stroke-width="2"/></svg>
<svg class="a" style="left:14px;top:549px" width="33" height="34" viewBox="0 0 33 34"><path d="M2 2H31V32H6Q2 32 2 28Z" fill="none" stroke="#7b7b7b" stroke-width="2"/><path d="M2 25Q2 24 6 24H31" fill="none" stroke="#7b7b7b" stroke-width="2"/><path d="M9 2V12L12 9.5L15 12V2" fill="none" stroke="#7b7b7b" stroke-width="2"/></svg>
<svg class="a" style="left:14px;top:627px" width="33" height="34" viewBox="0 0 33 34"><path d="M3 2H18L27 11V32H3Z" fill="none" stroke="#7b7b7b" stroke-width="2" stroke-linejoin="round"/><path d="M18 2V11H27" fill="none" stroke="#7b7b7b" stroke-width="2"/></svg>
<svg class="a" style="left:14px;top:703px" width="33" height="34" viewBox="0 0 33 34"><path d="M1.5 3L16 7L30.5 3V29L16 33L1.5 29Z" fill="none" stroke="#7b7b7b" stroke-width="2" stroke-linejoin="round"/><path d="M16 7V33" fill="none" stroke="#7b7b7b" stroke-width="2"/><path d="M5 11L12 13M5 16L12 18M5 21L12 23M20 13L27 11M20 18L27 16M20 23L27 21" fill="none" stroke="#7b7b7b" stroke-width="2"/></svg>
<svg class="a" style="left:14px;top:797px" width="33" height="34" viewBox="0 0 33 34"><circle cx="12" cy="11" r="8.5" fill="none" stroke="#7b7b7b" stroke-width="2"/><path d="M1.5 28Q1.5 20 12 20Q22.5 20 22.5 28Q22.5 32 19 32H5Q1.5 32 1.5 28Z" fill="none" stroke="#7b7b7b" stroke-width="2"/><path d="M19 4A6 6 0 1 1 22 16Q31 17 31 22Q31 25 27 25H23" fill="none" stroke="#7b7b7b" stroke-width="2"/></svg>
<svg class="a" style="left:14px;top:889px" width="33" height="34" viewBox="0 0 33 34"><path d="M31 2L1.5 16L14 19L17 31Z" fill="none" stroke="#7b7b7b" stroke-width="2" stroke-linejoin="round"/></svg>
<svg class="a" style="left:14px;top:967px" width="33" height="34" viewBox="0 0 33 34"><rect x="1.5" y="1.5" width="12" height="12" rx="1.5" fill="none" stroke="#7b7b7b" stroke-width="2"/><rect x="18.5" y="1.5" width="12" height="12" rx="1.5" fill="none" stroke="#7b7b7b" stroke-width="2"/><rect x="1.5" y="18.5" width="12" height="12" rx="1.5" fill="none" stroke="#7b7b7b" stroke-width="2"/><rect x="18.5" y="18.5" width="12" height="12" rx="1.5" fill="none" stroke="#7b7b7b" stroke-width="2"/><path d="M13.5 7.5H18.5M13.5 24.5H18.5M7.5 13.5V18.5M24.5 13.5V18.5" stroke="#7b7b7b" stroke-width="2.5"/></svg>
<svg class="a" style="left:14px;top:1039px" width="33" height="34" viewBox="0 0 33 34"><path d="M10 5A15 15 0 0 0 14 33M20 2A15 15 0 0 1 18 32" fill="none" stroke="#7b7b7b" stroke-width="2"/><path d="M13 1L10 5L14 9" fill="none" stroke="#7b7b7b" stroke-width="2"/><path d="M21 26L18 32L25 33" fill="none" stroke="#7b7b7b" stroke-width="2"/></svg>
<svg class="a" style="left:14px;top:1142px" width="33" height="34" viewBox="0 0 33 34"><rect x="5" y="1" width="23" height="23" fill="none" stroke="#7b7b7b" stroke-width="2"/></svg>
<svg class="a" style="left:14px;top:1211px" width="33" height="34" viewBox="0 0 33 34"><path d="M21 5H6Q2 5 2 9V28Q2 32 6 32H25Q29 32 29 28V14" fill="none" stroke="#7b7b7b" stroke-width="2"/><path d="M27 2L31 6L15 22L9 25L12 18Z" fill="none" stroke="#7b7b7b" stroke-width="2" stroke-linejoin="round"/></svg>
<svg class="a" style="left:14px;top:1308px" width="33" height="34" viewBox="0 0 33 34"><rect x="2" y="2" width="29" height="30" rx="3" fill="none" stroke="#7b7b7b" stroke-width="2"/><path d="M2 9H31" fill="none" stroke="#7b7b7b" stroke-width="2"/><path d="M9 14Q10 24 16.5 24Q23 24 24 14" fill="none" stroke="#7b7b7b" stroke-width="2"/></svg>
<svg class="a" style="left:14px;top:1384px" width="33" height="34" viewBox="0 0 33 34"><rect x="2" y="2" width="29" height="30" rx="3" fill="none" stroke="#7b7b7b" stroke-width="2"/><circle cx="18" cy="10" r="3" fill="none" stroke="#7b7b7b" stroke-width="2"/><path d="M2 22L10 16L24 27M17 21L23 18L31 24" fill="none" stroke="#7b7b7b" stroke-width="2"/></svg>
<svg class="a" style="left:14px;top:1460px" width="33" height="34" viewBox="0 0 33 34"><path d="M12 20L20 12" fill="none" stroke="#7b7b7b" stroke-width="2"/><path d="M14 8L19 3Q22 0 25 3L29 7Q32 10 29 13L24 18" fill="none" stroke="#7b7b7b" stroke-width="2"/><path d="M18 24L13 29Q10 32 7 29L3 25Q0 22 3 19L8 14" fill="none" stroke="#7b7b7b" stroke-width="2"/></svg>
<div class="a sdiv" style="top:766px"></div>
<div class="a sdiv" style="top:860px"></div>
<div class="a sdiv" style="top:1106px"></div>
<div class="a sdiv" style="top:1276px"></div>
<svg class="a" style="left:0;top:0" width="2859" height="1569" viewBox="0 0 2859 1569"><path d="M1632.5 615.5 L1243.9 775.4 L1244.5 765.8 L1228.1 787.6 L1255 791 L1248 785.4 Z" fill="#ff1a0d"/><path d="M423 1531.8 L256.3 1492.6 L261.8 1485.2 L236.2 1494.3 L256.7 1511.8 L254.2 1503.3 Z" fill="#ff1a0d"/></svg>
<div class="t" style="left:36.1px;top:189.5px;font-size:24.5px;color:#000;">禁用</div>
<svg class="a" style="left:85.8px;top:196px" width="14.5" height="8.5" viewBox="0 0 14.5 8.5"><defs><linearGradient id="tgr" x1="0" y1="0" x2="0" y2="1"><stop offset="0" stop-color="#3a3a3a"/><stop offset="1" stop-color="#6a6a6a"/></linearGradient></defs><path d="M0 0H14.5L7.2 8.5Z" fill="url(#tgr)"/></svg>
<div class="t" style="left:146.8px;top:187.3px;font-size:25.00px;color:#000;transform:scaleX(0.984);transform-origin:0 0;">Cookies</div>
<svg class="a" style="left:238.5px;top:196px" width="14.5" height="8.5" viewBox="0 0 14.5 8.5"><defs><linearGradient id="tgr" x1="0" y1="0" x2="0" y2="1"><stop offset="0" stop-color="#3a3a3a"/><stop offset="1" stop-color="#6a6a6a"/></linearGradient></defs><path d="M0 0H14.5L7.2 8.5Z" fill="url(#tgr)"/></svg>
<div class="t" style="left:299.5px;top:187.3px;font-size:25.00px;color:#000;transform:scaleX(0.817);transform-origin:0 0;">CSS</div>
<svg class="a" style="left:344.5px;top:196px" width="14.5" height="8.5" viewBox="0 0 14.5 8.5"><defs><linearGradient id="tgr" x1="0" y1="0" x2="0" y2="1"><stop offset="0" stop-color="#3a3a3a"/><stop offset="1" stop-color="#6a6a6a"/></linearGradient></defs><path d="M0 0H14.5L7.2 8.5Z" fill="url(#tgr)"/></svg>
<div class="t" style="left:404.5px;top:189.5px;font-size:24.5px;color:#000;">表单</div>
<svg class="a" style="left:454.5px;top:196px" width="14.5" height="8.5" viewBox="0 0 14.5 8.5"><defs><linearGradient id="tgr" x1="0" y1="0" x2="0" y2="1"><stop offset="0" stop-color="#3a3a3a"/><stop offset="1" stop-color="#6a6a6a"/></linearGradient></defs><path d="M0 0H14.5L7.2 8.5Z" fill="url(#tgr)"/></svg>
<div class="t" style="left:514.5px;top:189.5px;font-size:24.5px;color:#000;">图片</div>
<svg class="a" style="left:564.3px;top:196px" width="14.5" height="8.5" viewBox="0 0 14.5 8.5"><defs><linearGradient id="tgr" x1="0" y1="0" x2="0" y2="1"><stop offset="0" stop-color="#3a3a3a"/><stop offset="1" stop-color="#6a6a6a"/></linearGradient></defs><path d="M0 0H14.5L7.2 8.5Z" fill="url(#tgr)"/></svg>
<div class="t" style="left:625.2px;top:189.5px;font-size:24.5px;color:#000;">网页信息</div>
<svg class="a" style="left:723.0px;top:196px" width="14.5" height="8.5" viewBox="0 0 14.5 8.5"><defs><linearGradient id="tgr" x1="0" y1="0" x2="0" y2="1"><stop offset="0" stop-color="#3a3a3a"/><stop offset="1" stop-color="#6a6a6a"/></linearGradient></defs><path d="M0 0H14.5L7.2 8.5Z" fill="url(#tgr)"/></svg>
<div class="t" style="left:781.5px;top:189.5px;font-size:24.5px;color:#000;">其他功能</div>
<svg class="a" style="left:881.2px;top:196px" width="14.5" height="8.5" viewBox="0 0 14.5 8.5"><defs><linearGradient id="tgr" x1="0" y1="0" x2="0" y2="1"><stop offset="0" stop-color="#3a3a3a"/><stop offset="1" stop-color="#6a6a6a"/></linearGradient></defs><path d="M0 0H14.5L7.2 8.5Z" fill="url(#tgr)"/></svg>
<div class="t" style="left:940.5px;top:189.5px;font-size:24.5px;color:#000;">标记</div>
<svg class="a" style="left:990.5px;top:196px" width="14.5" height="8.5" viewBox="0 0 14.5 8.5"><defs><linearGradient id="tgr" x1="0" y1="0" x2="0" y2="1"><stop offset="0" stop-color="#3a3a3a"/><stop offset="1" stop-color="#6a6a6a"/></linearGradient></defs><path d="M0 0H14.5L7.2 8.5Z" fill="url(#tgr)"/></svg>
<div class="t" style="left:1050.2px;top:189.5px;font-size:24.5px;color:#000;">缩放</div>
<svg class="a" style="left:1100.5px;top:196px" width="14.5" height="8.5" viewBox="0 0 14.5 8.5"><defs><linearGradient id="tgr" x1="0" y1="0" x2="0" y2="1"><stop offset="0" stop-color="#3a3a3a"/><stop offset="1" stop-color="#6a6a6a"/></linearGradient></defs><path d="M0 0H14.5L7.2 8.5Z" fill="url(#tgr)"/></svg>
<div class="t" style="left:1160.5px;top:189.5px;font-size:24.5px;color:#000;">工具</div>
<svg class="a" style="left:1210.5px;top:196px" width="14.5" height="8.5" viewBox="0 0 14.5 8.5"><defs><linearGradient id="tgr" x1="0" y1="0" x2="0" y2="1"><stop offset="0" stop-color="#3a3a3a"/><stop offset="1" stop-color="#6a6a6a"/></linearGradient></defs><path d="M0 0H14.5L7.2 8.5Z" fill="url(#tgr)"/></svg>
<div class="t" style="left:1270.2px;top:189.5px;font-size:24.5px;color:#000;">查看源代码</div>
<svg class="a" style="left:1393.3px;top:196px" width="14.5" height="8.5" viewBox="0 0 14.5 8.5"><defs><linearGradient id="tgr" x1="0" y1="0" x2="0" y2="1"><stop offset="0" stop-color="#3a3a3a"/><stop offset="1" stop-color="#6a6a6a"/></linearGradient></defs><path d="M0 0H14.5L7.2 8.5Z" fill="url(#tgr)"/></svg>
<div class="t" style="left:1452.3px;top:189.5px;font-size:24.5px;color:#000;">选项</div>
<svg class="a" style="left:1503.5px;top:196px" width="14.5" height="8.5" viewBox="0 0 14.5 8.5"><defs><linearGradient id="tgr" x1="0" y1="0" x2="0" y2="1"><stop offset="0" stop-color="#3a3a3a"/><stop offset="1" stop-color="#6a6a6a"/></linearGradient></defs><path d="M0 0H14.5L7.2 8.5Z" fill="url(#tgr)"/></svg>
<svg class="a" style="left:4px;top:184px" width="32" height="33" viewBox="0 0 32 33"><defs><linearGradient id="sr" x1="0" y1="0" x2="0" y2="1"><stop offset="0" stop-color="#e8643a"/><stop offset="1" stop-color="#c41e00"/></linearGradient></defs><ellipse cx="16" cy="31" rx="11" ry="1.5" fill="#000" opacity="0.12"/><circle cx="16" cy="16" r="12.4" fill="#f0f0f0" stroke="url(#sr)" stroke-width="4.8"/><path d="M8 24L24.5 7.5" stroke="url(#sr)" stroke-width="4.5"/></svg>
<svg class="a" style="left:115px;top:185px" width="30" height="29" viewBox="0 0 30 29"><path d="M15 1C19.5 1 21 4 21 8C21 12 19 15 17.5 16H12.5C11 15 9 12 9 8C9 4 10.5 1 15 1Z" fill="#1a1a1a"/><path d="M1 28Q1 19 9.5 17.5L12 16.5H18L20.5 17.5Q29 19 29 28Z" fill="#1a1a1a"/></svg>
<svg class="a" style="left:268px;top:185px" width="31" height="31" viewBox="0 0 31 31"><defs><radialGradient id="wg" cx="0.55" cy="0.4" r="0.5"><stop offset="0" stop-color="#fff3b0"/><stop offset="0.6" stop-color="#ffe27a" stop-opacity="0.6"/><stop offset="1" stop-color="#ffe27a" stop-opacity="0"/></radialGradient></defs><circle cx="17" cy="13" r="13" fill="url(#wg)"/><path d="M3 29L26 5" stroke="#111" stroke-width="3.6" stroke-linecap="round"/><path d="M23 8L27 4" stroke="#f2f2f2" stroke-width="3"/><path d="M11 5l1 3 3 1-3 1-1 3-1-3-3-1 3-1z" fill="#f5c400"/><path d="M21 1l.8 2.2 2.2.8-2.2.8-.8 2.2-.8-2.2-2.2-.8 2.2-.8z" fill="#f5c400"/><path d="M22 16l1 3 3 1-3 1-1 3-1-3-3-1 3-1z" fill="#fffbe0"/><path d="M16 25l.8 2 2 .8-2 .8-.8 2-.8-2-2-.8 2-.8z" fill="#f5c400"/></svg>
<svg class="a" style="left:375px;top:183px" width="28" height="34" viewBox="0 0 28 34"><defs><linearGradient id="cb" x1="0" y1="0" x2="1" y2="0"><stop offset="0" stop-color="#b86a2a"/><stop offset="0.5" stop-color="#d08a48"/><stop offset="1" stop-color="#b06a2c"/></linearGradient></defs><rect x="1" y="5" width="26" height="28" rx="1" fill="url(#cb)"/><path d="M4.5 7H24V25L19 29H4.5Z" fill="#f4f4f4"/><path d="M24 25L19 29V25Z" fill="#cfcfcf"/><rect x="7.5" y="2.5" width="13" height="6" rx="2" fill="#d8d8d8" stroke="#999" stroke-width="0.8"/><circle cx="14" cy="2.5" r="2" fill="#bbb" stroke="#999" stroke-width="0.8"/></svg>
<svg class="a" style="left:483px;top:188px" width="31" height="25" viewBox="0 0 31 25"><rect x="0.5" y="0.5" width="30" height="24" fill="#e6e6e6" stroke="#9a9a9a"/><defs><linearGradient id="pg" x1="0" y1="0" x2="0" y2="1"><stop offset="0" stop-color="#3f7a20"/><stop offset="0.5" stop-color="#7aa83a"/><stop offset="1" stop-color="#4a8020"/></linearGradient></defs><rect x="3" y="3" width="25" height="19" fill="url(#pg)"/><g fill="#f4f4f4"><ellipse cx="10" cy="12" rx="5" ry="1.6"/><ellipse cx="21" cy="12" rx="5" ry="1.6"/><ellipse cx="15.5" cy="8" rx="1.6" ry="4"/><ellipse cx="12" cy="9" rx="1.4" ry="3.6" transform="rotate(-35 12 9)"/><ellipse cx="19" cy="9" rx="1.4" ry="3.6" transform="rotate(35 19 9)"/><ellipse cx="11" cy="15" rx="1.4" ry="3" transform="rotate(50 11 15)"/><ellipse cx="20" cy="15" rx="1.4" ry="3" transform="rotate(-50 20 15)"/></g><ellipse cx="15.5" cy="13" rx="3" ry="2" fill="#e8a80c"/></svg>
<svg class="a" style="left:593px;top:184px" width="32" height="32" viewBox="0 0 32 32"><defs><linearGradient id="ib" x1="0" y1="0" x2="0" y2="1"><stop offset="0" stop-color="#5aa2ea"/><stop offset="0.5" stop-color="#1f6fd0"/><stop offset="1" stop-color="#0a4aa8"/></linearGradient></defs><ellipse cx="16" cy="30" rx="11" ry="1.6" fill="#000" opacity="0.15"/><circle cx="16" cy="15.5" r="15" fill="url(#ib)"/><circle cx="16" cy="7.8" r="2.4" fill="#fff"/><rect x="13.6" y="11.5" width="4.8" height="12.5" fill="#f0f0f0"/></svg>
<svg class="a" style="left:754px;top:184px" width="26" height="31" viewBox="0 0 26 31"><defs><linearGradient id="bx" x1="0" y1="0" x2="1" y2="0"><stop offset="0" stop-color="#b8742e"/><stop offset="0.5" stop-color="#e0a860"/><stop offset="1" stop-color="#b8742e"/></linearGradient></defs><path d="M2 1H24L25 6V30H1V6Z" fill="url(#bx)" stroke="#8a5220" stroke-width="0.8"/><path d="M1 6H25" stroke="#8a5220" stroke-width="1"/><path d="M4 9H22V27H4Z" fill="none" stroke="#9a6028" stroke-width="0.8"/><path d="M4 12H22M4 15H22M4 18H22M4 21H22M4 24H22" stroke="#b07030" stroke-width="0.9"/></svg>
<svg class="a" style="left:908px;top:184px" width="34" height="32" viewBox="0 0 34 32"><path d="M2 31L4 24L24 4L29 9L9 29Z" fill="#f0a830" stroke="#a06010" stroke-width="1"/><path d="M6 26L26 6" stroke="#ffd070" stroke-width="1.2"/><path d="M24 4L29 9L30.5 7.5L25.5 2.5Z" fill="#ccc"/><path d="M25.5 2.5L30.5 7.5L32 5.5Q32 2 29 1Q27 0.5 25.5 2.5Z" fill="#c83a3a"/><path d="M2 31L4 24L9 29Z" fill="#f2d8b0"/><path d="M2 31L2.8 28.5L4.5 30.2Z" fill="#333"/></svg>
<svg class="a" style="left:1019px;top:184px" width="31" height="32" viewBox="0 0 31 32"><path d="M1 25L24 2L30 8L7 31Z" fill="#d8a058" stroke="#8a5a20" stroke-width="1"/><path d="M22 6L24 8M19 9L20.5 10.5M16 12L18 14M13 15L14.5 16.5M10 18L12 20M7 21L8.5 22.5" stroke="#8a5a20" stroke-width="0.9"/><circle cx="5" cy="26" r="1" fill="#fff"/></svg>
<svg class="a" style="left:1129px;top:184px" width="32" height="32" viewBox="0 0 32 32"><path d="M2 3L15 16" stroke="#999" stroke-width="2"/><path d="M2 3L4 2" stroke="#ddd" stroke-width="2"/><path d="M15 16L28 29" stroke="#2a78d0" stroke-width="5" stroke-linecap="round"/><path d="M25 9L8 26" stroke="#8a8a8a" stroke-width="4"/><circle cx="6" cy="28" r="3.5" fill="#ddd" stroke="#777" stroke-width="2"/><path d="M21 2A6.5 6.5 0 1 0 30 11L26 11L21 6Z" fill="#999" stroke="#777" stroke-width="1"/></svg>
<svg class="a" style="left:1240px;top:188px" width="30" height="24" viewBox="0 0 30 24"><rect x="0.5" y="0.5" width="29" height="23" rx="2.5" fill="#9a9a9a" stroke="#777"/><rect x="3" y="3" width="24" height="18" fill="#1e2a1e"/><path d="M5.5 6L8.5 8L5.5 10M9 10.5H11.5" fill="none" stroke="#8f8" stroke-width="1"/></svg>
<svg class="a" style="left:1421px;top:184px" width="32" height="32" viewBox="0 0 32 32"><defs><linearGradient id="sw" x1="0" y1="0" x2="0" y2="1"><stop offset="0" stop-color="#f2f2f2"/><stop offset="1" stop-color="#c8c8c8"/></linearGradient></defs><rect x="0.5" y="0.5" width="31" height="31" rx="1" fill="url(#sw)" stroke="#a8a8a8"/><rect x="11" y="6" width="10" height="21" rx="1" fill="#e8e8e8" stroke="#888" stroke-width="0.8"/><rect x="12" y="7" width="8" height="9" fill="#222"/><path d="M21 17L27 29H20Z" fill="#999" opacity="0.5"/></svg>
<svg class="a" style="left:2732px;top:186px" width="32" height="28" viewBox="0 0 32 28"><defs><linearGradient id="ck" x1="0" y1="0" x2="0" y2="1"><stop offset="0" stop-color="#8cc43a"/><stop offset="1" stop-color="#3f7a10"/></linearGradient></defs><path d="M1 15L5 11L11 17L27 1L31 5L11 25Z" fill="url(#ck)" stroke="#3a6a10" stroke-width="0.8"/></svg>
<svg class="a" style="left:2776px;top:184px" width="32" height="32" viewBox="0 0 32 32"><defs><radialGradient id="xr1" cx="0.45" cy="0.3" r="0.8"><stop offset="0" stop-color="#f06040"/><stop offset="1" stop-color="#b81800"/></radialGradient></defs><ellipse cx="16" cy="30.5" rx="10" ry="1.5" fill="#000" opacity="0.12"/><circle cx="16" cy="15.5" r="14.8" fill="url(#xr1)"/><path d="M10.5 10L21.5 21M21.5 10L10.5 21" stroke="#e8e8e8" stroke-width="4.2"/></svg>
<svg class="a" style="left:2820px;top:184px" width="32" height="32" viewBox="0 0 32 32"><defs><radialGradient id="xr2" cx="0.45" cy="0.3" r="0.8"><stop offset="0" stop-color="#f06040"/><stop offset="1" stop-color="#b81800"/></radialGradient></defs><ellipse cx="16" cy="30.5" rx="10" ry="1.5" fill="#000" opacity="0.12"/><circle cx="16" cy="15.5" r="14.8" fill="url(#xr2)"/><path d="M10.5 10L21.5 21M21.5 10L10.5 21" stroke="#e8e8e8" stroke-width="4.2"/></svg>
<!-- hackbar -->
<div id="hack" class="a"></div>
<div class="a" style="left:6px;top:226px;width:171px;height:35px;background:#fff"></div>
<div class="t" style="left:10.4px;top:231.7px;font-size:25.73px;color:#000;transform:scaleX(0.799);transform-origin:0 0;">INT</div>
<svg class="a" style="left:159px;top:237px" width="15" height="12" viewBox="0 0 15 12"><path d="M1 2.5L7.5 9L14 2.5" fill="none" stroke="#555" stroke-width="1.6"/></svg>
<svg class="a" style="left:194px;top:240px" width="18" height="11" viewBox="0 0 18 11"><rect x="1" y="1" width="16" height="9" rx="3" fill="#3fbf1f" stroke="#1f8a0f" stroke-width="1.2"/></svg>
<svg class="a" style="left:227px;top:236px" width="20" height="19" viewBox="0 0 20 19"><path d="M7 1H13V6.5H19V12.5H13V18H7V12.5H1V6.5H7Z" fill="#3fbf1f" stroke="#1f8a0f" stroke-width="1.2" stroke-linejoin="round"/></svg>
<div class="t" style="left:269.0px;top:231.7px;font-size:25.73px;color:#000;transform:scaleX(0.878);transform-origin:0 0;">SQL BASICS</div>
<svg class="a" style="left:404.7px;top:245px" width="9" height="5" viewBox="0 0 9 5"><path d="M0 0H9L4.5 5Z" fill="#333"/></svg>
<div class="t" style="left:436.8px;top:231.7px;font-size:25.73px;color:#000;transform:scaleX(0.938);transform-origin:0 0;">UNION BASED</div>
<svg class="a" style="left:604.0px;top:245px" width="9" height="5" viewBox="0 0 9 5"><path d="M0 0H9L4.5 5Z" fill="#333"/></svg>
<div class="t" style="left:637.3px;top:231.7px;font-size:25.73px;color:#000;transform:scaleX(0.895);transform-origin:0 0;">ERROR/DOUBLE QUERY</div>
<svg class="a" style="left:911.6px;top:245px" width="9" height="5" viewBox="0 0 9 5"><path d="M0 0H9L4.5 5Z" fill="#333"/></svg>
<div class="t" style="left:942.7px;top:231.7px;font-size:25.73px;color:#000;transform:scaleX(0.891);transform-origin:0 0;">TOOLS</div>
<svg class="a" style="left:1023.0px;top:245px" width="9" height="5" viewBox="0 0 9 5"><path d="M0 0H9L4.5 5Z" fill="#333"/></svg>
<div class="t" style="left:1054.5px;top:231.7px;font-size:25.73px;color:#000;transform:scaleX(0.902);transform-origin:0 0;">WAF BYPASS</div>
<svg class="a" style="left:1204.7px;top:245px" width="9" height="5" viewBox="0 0 9 5"><path d="M0 0H9L4.5 5Z" fill="#333"/></svg>
<div class="t" style="left:1235.8px;top:231.7px;font-size:25.73px;color:#000;transform:scaleX(0.938);transform-origin:0 0;">ENCODING</div>
<svg class="a" style="left:1367.7px;top:245px" width="9" height="5" viewBox="0 0 9 5"><path d="M0 0H9L4.5 5Z" fill="#333"/></svg>
<div class="t" style="left:1399.6px;top:231.7px;font-size:25.73px;color:#000;transform:scaleX(0.960);transform-origin:0 0;">HTML</div>
<svg class="a" style="left:1468.6px;top:245px" width="9" height="5" viewBox="0 0 9 5"><path d="M0 0H9L4.5 5Z" fill="#333"/></svg>
<div class="t" style="left:1499.8px;top:231.7px;font-size:25.73px;color:#000;transform:scaleX(0.899);transform-origin:0 0;">ENCRYPTION</div>
<svg class="a" style="left:1652.6px;top:245px" width="9" height="5" viewBox="0 0 9 5"><path d="M0 0H9L4.5 5Z" fill="#333"/></svg>
<div class="t" style="left:1684.0px;top:231.7px;font-size:25.73px;color:#000;transform:scaleX(0.885);transform-origin:0 0;">OTHER</div>
<svg class="a" style="left:1765.0px;top:245px" width="9" height="5" viewBox="0 0 9 5"><path d="M0 0H9L4.5 5Z" fill="#333"/></svg>
<div class="t" style="left:1796.7px;top:231.7px;font-size:25.73px;color:#000;transform:scaleX(0.829);transform-origin:0 0;">XSS</div>
<svg class="a" style="left:1840.0px;top:245px" width="9" height="5" viewBox="0 0 9 5"><path d="M0 0H9L4.5 5Z" fill="#333"/></svg>
<div class="t" style="left:1873.6px;top:231.7px;font-size:25.73px;color:#000;transform:scaleX(0.783);transform-origin:0 0;">LFI</div>
<svg class="a" style="left:1905.3px;top:245px" width="9" height="5" viewBox="0 0 9 5"><path d="M0 0H9L4.5 5Z" fill="#333"/></svg>
<div class="a" style="left:207px;top:270px;width:2603px;height:144px;background:#fff;border:2.5px solid #1c8c1c;border-radius:19px"></div>
<svg class="a" style="left:2827px;top:283px" width="19" height="10" viewBox="0 0 19 10"><rect x="1" y="1" width="17" height="8" rx="3" fill="#3fbf1f" stroke="#1f8a0f" stroke-width="1.2"/></svg>
<svg class="a" style="left:2827px;top:313px" width="19" height="19" viewBox="0 0 20 19"><path d="M7 1H13V6.5H19V12.5H13V18H7V12.5H1V6.5H7Z" fill="#3fbf1f" stroke="#1f8a0f" stroke-width="1.2" stroke-linejoin="round"/></svg>
<svg class="a" style="left:5px;top:276px" width="34" height="32" viewBox="0 0 34 32"><defs><linearGradient id="lu" x1="0" y1="0" x2="0" y2="1"><stop offset="0" stop-color="#f0f0f0"/><stop offset="1" stop-color="#a8a8a8"/></linearGradient></defs><path d="M6 2H30L33 10V26H1V10Z" fill="url(#lu)" stroke="#9a9a9a" stroke-width="1"/><path d="M6 5H29" stroke="#d8d8d8" stroke-width="2"/><rect x="11" y="18" width="23" height="13" rx="5" fill="#666"/><rect x="15" y="21.5" width="15" height="6" rx="3" fill="#bbb"/><rect x="18" y="23" width="9" height="3" rx="1.5" fill="#555"/></svg>
<div class="t" style="left:65.0px;top:277.0px;font-size:26.45px;color:#000;transform:scaleX(0.909);transform-origin:0 0;">Lo<u>a</u>d URL</div>
<svg class="a" style="left:10px;top:321px" width="22" height="38" viewBox="0 0 22 38"><path d="M10 21Q3 14 4 6Q5 1 8 1Q10 1 10 5Z" fill="#6a9ab0"/><path d="M12 21Q19 14 18 6Q17 1 14 1Q12 1 12 5Z" fill="#6a9ab0"/><path d="M9.5 19Q6 13 6.5 7Q7 3.5 8.5 4Z" fill="#cdeef8"/><path d="M12.5 19Q16 13 15.5 7Q15 3.5 13.5 4Z" fill="#cdeef8"/><rect x="9" y="21" width="4" height="4" fill="#333"/><rect x="2.5" y="25" width="6" height="11" rx="3" fill="none" stroke="#3a3a3a" stroke-width="2.4"/><rect x="13.5" y="25" width="6" height="11" rx="3" fill="none" stroke="#3a3a3a" stroke-width="2.4"/></svg>
<div class="t" style="left:67.0px;top:327.5px;font-size:27.18px;color:#000;transform:scaleX(0.903);transform-origin:0 0;"><u>S</u>plit URL</div>
<svg class="a" style="left:5px;top:373px" width="34" height="34" viewBox="0 0 34 34"><defs><radialGradient id="ex" cx="0.5" cy="0.45" r="0.55"><stop offset="0" stop-color="#f4f8ff"/><stop offset="0.75" stop-color="#e0eaf8"/><stop offset="1" stop-color="#9cc0f0"/></radialGradient></defs><circle cx="17" cy="17" r="16" fill="#a8c8f4" opacity="0.7"/><circle cx="17" cy="17" r="13" fill="url(#ex)" stroke="#b8b8b8" stroke-width="1.2"/><path d="M14 10.5L21.5 17L14 23.5Z" fill="#4a86d8"/></svg>
<div class="t" style="left:72.0px;top:376.4px;font-size:27.91px;color:#000;transform:scaleX(0.868);transform-origin:0 0;">E<u>x</u>ecute</div>
<div class="a" style="left:216px;top:433px;width:26px;height:26px;border:2px solid #333;border-radius:5px;background:#fff"></div>
<div class="t" style="left:254.6px;top:432.5px;font-size:27.33px;color:#000;transform:scaleX(0.920);transform-origin:0 0;">Post data</div>
<div class="a" style="left:394px;top:433px;width:26px;height:26px;border:2px solid #333;border-radius:5px;background:#fff"></div>
<div class="t" style="left:432.4px;top:432.5px;font-size:27.33px;color:#000;transform:scaleX(0.911);transform-origin:0 0;">Referrer</div>
<svg class="a" style="left:0;top:0" width="0" height="0"><defs><linearGradient id="cg" x1="0" y1="0" x2="0" y2="1"><stop offset="0" stop-color="#444"/><stop offset="0.45" stop-color="#7a7a7a"/><stop offset="0.55" stop-color="#b4b4b4"/><stop offset="1" stop-color="#a0a0a0"/></linearGradient><linearGradient id="cw" x1="0" y1="0" x2="0" y2="1"><stop offset="0" stop-color="#444"/><stop offset="0.48" stop-color="#888"/><stop offset="0.52" stop-color="#fff"/><stop offset="1" stop-color="#fff"/></linearGradient></defs></svg>
<svg class="a" style="left:547px;top:433px" width="46" height="26" viewBox="0 0 46 26"><path d="M12.5 1H44.5L34.5 12.5L44.5 24.5H12.5L0.5 12.5Z" fill="url(#cg)" stroke="#666" stroke-width="1"/></svg>
<div class="t" style="left:613.0px;top:431.6px;font-size:24.93px;color:#000;transform:scaleX(0.931);transform-origin:0 0;">0xHEX</div>
<svg class="a" style="left:703px;top:433px" width="46" height="26" viewBox="0 0 46 26"><path d="M1 1H34L45 12.5L34 24.5H1L11 12.5Z" fill="url(#cg)" stroke="#666" stroke-width="1"/></svg>
<svg class="a" style="left:795px;top:433px" width="46" height="26" viewBox="0 0 46 26"><path d="M12.5 1H44.5L34.5 12.5L44.5 24.5H12.5L0.5 12.5Z" fill="url(#cg)" stroke="#666" stroke-width="1"/></svg>
<div class="t" style="left:859.0px;top:431.6px;font-size:24.93px;color:#000;transform:scaleX(0.944);transform-origin:0 0;">%URL</div>
<svg class="a" style="left:944px;top:433px" width="46" height="26" viewBox="0 0 46 26"><path d="M1 1H34L45 12.5L34 24.5H1L11 12.5Z" fill="url(#cg)" stroke="#666" stroke-width="1"/></svg>
<svg class="a" style="left:1036px;top:433px" width="46" height="26" viewBox="0 0 46 26"><path d="M12.5 1H44.5L34.5 12.5L44.5 24.5H12.5L0.5 12.5Z" fill="url(#cg)" stroke="#666" stroke-width="1"/></svg>
<div class="t" style="left:1101.9px;top:431.6px;font-size:24.93px;color:#000;transform:scaleX(0.906);transform-origin:0 0;">BASE64</div>
<svg class="a" style="left:1205px;top:433px" width="46" height="26" viewBox="0 0 46 26"><path d="M1 1H34L45 12.5L34 24.5H1L11 12.5Z" fill="url(#cg)" stroke="#666" stroke-width="1"/></svg>
<div class="a" style="left:1292px;top:419px;width:268px;height:55px;background:#fff;border:2.5px solid #1c8c1c;overflow:hidden"><div class="t" style="left:7.3px;top:11.0px;font-size:26.40px;color:#7d7d7d;font-style:italic;">Insert string to replace</div>
</div>
<div class="a" style="left:1572px;top:419px;width:267px;height:55px;background:#fff;border:2.5px solid #1c8c1c;overflow:hidden"><div class="t" style="left:7.0px;top:11.0px;font-size:26.40px;color:#7d7d7d;font-style:italic;">Insert replacing string</div>
</div>
<svg class="a" style="left:1854px;top:432px" width="27" height="27" viewBox="0 0 27 27"><rect x="0.5" y="0.5" width="26" height="26" rx="5" fill="#0a63d1"/><path d="M7 13.5L11.5 18L20 9" fill="none" stroke="#fff" stroke-width="1.8"/></svg>
<div class="t" style="left:1894.0px;top:431.4px;font-size:27.47px;color:#000;transform:scaleX(0.902);transform-origin:0 0;">Replace All</div>
<svg class="a" style="left:2042px;top:433px" width="46" height="26" viewBox="0 0 46 26"><path d="M1 1H34L45 12.5L34 24.5H1L11 12.5Z" fill="url(#cg)" stroke="#666" stroke-width="1"/></svg>
<div class="a" style="left:2102px;top:418px;width:0;height:52px;border-left:2px dashed #555"></div>
<svg class="a" style="left:2110px;top:433px" width="48" height="26" viewBox="0 0 48 26"><path d="M1 1H35L46 12.5L35 24.5H1L11 12.5Z" fill="url(#cw)" stroke="#555" stroke-width="1.5"/></svg>
</body></html>
